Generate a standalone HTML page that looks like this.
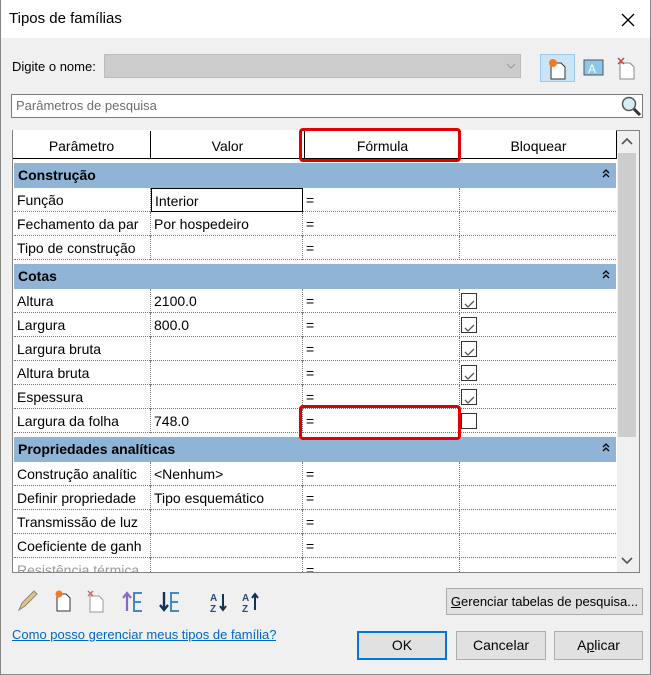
<!DOCTYPE html><html><head><meta charset="utf-8"><style>
*{box-sizing:border-box;margin:0;padding:0}
body{width:651px;height:675px;background:#f0f0f0;font-family:"Liberation Sans",sans-serif;font-size:14px;color:#000;position:relative;overflow:hidden}
.a{position:absolute}
.t{white-space:nowrap;overflow:hidden}
.row{position:absolute;left:14px;width:602px;height:24px;background:#fff;border-bottom:1px dotted #777}
.row div{position:absolute;top:0;height:24px;line-height:24px;padding-left:3px;white-space:nowrap;overflow:hidden}
.c1{left:0;width:137px;border-right:1px dotted #777}
.c2{left:137px;width:152px;border-right:1px dotted #777}
.c3{left:289px;width:157px;border-right:1px dotted #777}
.grp{position:absolute;left:14px;width:602px;height:25px;background:#8fb4d6;font-weight:bold;line-height:25px;padding-left:4px}
.grp svg{position:absolute;right:6px;top:6px}
.cb{position:absolute;left:447px!important;top:4px!important;width:16px!important;height:16px!important;border:1px solid #333;background:#fff;padding:0!important}
.btn{position:absolute;background:#e1e1e1;border:1px solid #adadad;text-align:center;font-size:14px;white-space:nowrap}
</style></head><body>
<div class="a" style="left:0;top:0;width:651px;height:38px;background:#fff"></div>
<div class="a" style="left:0;top:0;width:1px;height:675px;background:#888"></div>
<div class="a" style="right:0;top:0;width:1px;height:675px;background:#888"></div>
<div class="a" style="left:0;bottom:0;width:651px;height:1px;background:#888"></div>
<div class="a t" style="left:9px;top:10px;font-size:15px">Tipos de famílias</div>
<svg class="a" style="left:620px;top:12px" width="16" height="16"><path d="M2 2L14 14M14 2L2 14" stroke="#000" stroke-width="1.3"/></svg>

<div class="a t" style="left:12px;top:59px;font-size:13px">Digite o nome:</div>
<div class="a" style="left:104px;top:54px;width:417px;height:24px;background:#cccccc;border:1px solid #bbb"></div>
<svg class="a" style="left:506px;top:62px" width="10" height="8"><path d="M1 2L5 6L9 2" stroke="#999" fill="none"/></svg>
<div class="a" style="left:540px;top:54px;width:35px;height:28px;background:#cce4f7;border:1px solid #99c9ef"></div>
<svg class="a" style="left:546px;top:57px" width="24" height="24"><path d="M5 6h10l4 4v12H5z" fill="#fff" stroke="#333"/><circle cx="7" cy="6" r="4" fill="#f57a1f"/></svg>
<svg class="a" style="left:583px;top:58px" width="22" height="20"><rect x="1" y="2" width="19" height="15" fill="#8cc6ea" stroke="#555"/><text x="5" y="15" font-size="12" fill="#fff" font-family="Liberation Sans">A</text></svg>
<svg class="a" style="left:615px;top:55px" width="24" height="26"><path d="M5 8h10l4 4v12H5z" fill="#fff" stroke="#888"/><path d="M3 3l6 6M9 3l-6 6" stroke="#c44" stroke-width="1.5"/></svg>

<div class="a" style="left:11px;top:94px;width:632px;height:24px;background:#fff;border:1px solid #7a7a7a"></div>
<div class="a t" style="left:16px;top:98px;font-size:13px;color:#6d6d6d">Parâmetros de pesquisa</div>
<svg class="a" style="left:620px;top:95px" width="22" height="22"><circle cx="9" cy="9" r="6.5" fill="#d8eef7" stroke="#555" stroke-width="1.5"/><path d="M14 14l6 6" stroke="#333" stroke-width="3"/></svg>

<div class="a" style="left:12px;top:130px;width:628px;height:443px;background:#fff;border:1px solid #828282"></div>
<div class="a" style="left:13px;top:130px;width:603px;height:29px;background:#fff;border-bottom:1px solid #000"></div>
<div class="a" style="left:150px;top:131px;width:1px;height:28px;background:#000"></div>
<div class="a" style="left:304px;top:131px;width:1px;height:28px;background:#000"></div>
<div class="a" style="left:460px;top:131px;width:1px;height:28px;background:#000"></div>
<div class="a" style="left:616px;top:131px;width:1px;height:28px;background:#000"></div>
<div class="a t" style="left:13px;top:138px;width:137px;text-align:center">Parâmetro</div>
<div class="a t" style="left:151px;top:138px;width:153px;text-align:center">Valor</div>
<div class="a t" style="left:305px;top:138px;width:155px;text-align:center">Fórmula</div>
<div class="a t" style="left:461px;top:138px;width:155px;text-align:center">Bloquear</div>
<div class="a" style="left:617px;top:131px;width:22px;height:441px;background:#f0f0f0"></div>
<div class="a" style="left:618px;top:153px;width:18px;height:284px;background:#cdcdcd"></div>
<svg class="a" style="left:621px;top:138px" width="12" height="8"><path d="M1 6L6 1L11 6" stroke="#555" stroke-width="1.6" fill="none"/></svg>
<svg class="a" style="left:621px;top:557px" width="12" height="8"><path d="M1 1L6 6L11 1" stroke="#555" stroke-width="1.6" fill="none"/></svg>

<div class="grp" style="top:163px">Construção<svg width="8" height="10"><path d="M1 4L4 1L7 4M1 8L4 5L7 8" stroke="#000" stroke-width="1.3" fill="none"/></svg></div>
<div class="row" style="top:188px"><div class="c1">Função</div><div class="c2" style="border:1px solid #000;height:24px">Interior</div><div class="c3">=</div></div>
<div class="row" style="top:212px"><div class="c1">Fechamento da par</div><div class="c2">Por hospedeiro</div><div class="c3">=</div></div>
<div class="row" style="top:236px"><div class="c1">Tipo de construção</div><div class="c2"></div><div class="c3">=</div></div>
<div class="grp" style="top:264px">Cotas<svg width="8" height="10"><path d="M1 4L4 1L7 4M1 8L4 5L7 8" stroke="#000" stroke-width="1.3" fill="none"/></svg></div>
<div class="row" style="top:289px"><div class="c1">Altura</div><div class="c2">2100.0</div><div class="c3">=</div><div class="cb"><svg width="14" height="14"><path d="M3 7l3 3 6-6" stroke="#555" fill="none" stroke-width="1.3"/></svg></div></div>
<div class="row" style="top:313px"><div class="c1">Largura</div><div class="c2">800.0</div><div class="c3">=</div><div class="cb"><svg width="14" height="14"><path d="M3 7l3 3 6-6" stroke="#555" fill="none" stroke-width="1.3"/></svg></div></div>
<div class="row" style="top:337px"><div class="c1">Largura bruta</div><div class="c2"></div><div class="c3">=</div><div class="cb"><svg width="14" height="14"><path d="M3 7l3 3 6-6" stroke="#555" fill="none" stroke-width="1.3"/></svg></div></div>
<div class="row" style="top:361px"><div class="c1">Altura bruta</div><div class="c2"></div><div class="c3">=</div><div class="cb"><svg width="14" height="14"><path d="M3 7l3 3 6-6" stroke="#555" fill="none" stroke-width="1.3"/></svg></div></div>
<div class="row" style="top:385px"><div class="c1">Espessura</div><div class="c2"></div><div class="c3">=</div><div class="cb"><svg width="14" height="14"><path d="M3 7l3 3 6-6" stroke="#555" fill="none" stroke-width="1.3"/></svg></div></div>
<div class="row" style="top:409px"><div class="c1">Largura da folha</div><div class="c2">748.0</div><div class="c3">=</div><div class="cb"></div></div>
<div class="grp" style="top:437px">Propriedades analíticas<svg width="8" height="10"><path d="M1 4L4 1L7 4M1 8L4 5L7 8" stroke="#000" stroke-width="1.3" fill="none"/></svg></div>
<div class="row" style="top:462px"><div class="c1">Construção analític</div><div class="c2">&lt;Nenhum&gt;</div><div class="c3">=</div></div>
<div class="row" style="top:486px"><div class="c1">Definir propriedade</div><div class="c2">Tipo esquemático</div><div class="c3">=</div></div>
<div class="row" style="top:510px"><div class="c1">Transmissão de luz</div><div class="c2"></div><div class="c3">=</div></div>
<div class="row" style="top:534px"><div class="c1">Coeficiente de ganh</div><div class="c2"></div><div class="c3">=</div></div>
<div class="row" style="top:558px;height:14px;overflow:hidden;border:none"><div class="c1" style="color:#999">Resistência térmica</div><div class="c2"></div><div class="c3">=</div></div>

<div class="a" style="left:299px;top:128px;width:162px;height:34px;border:3px solid #e00000;border-radius:4px"></div>
<div class="a" style="left:299px;top:405px;width:162px;height:35px;border:3px solid #e00000;border-radius:4px"></div>

<svg class="a" style="left:14px;top:588px" width="250" height="26">
<path d="M5 22l3-7 12-12 3 3-12 12z" fill="#e6c27a" stroke="#888"/>
<path d="M43 6h9l4 4v13H43z" fill="#fff" stroke="#333"/><circle cx="45" cy="6" r="3.5" fill="#f57a1f"/>
<path d="M76 8h9l4 4v12H76z" fill="#fff" stroke="#999"/><path d="M74 3l5 5M79 3l-5 5" stroke="#c66" stroke-width="1.4"/>
<path d="M113 23V6M109 10l4-5 4 5" stroke="#86c" stroke-width="2.2" fill="none"/><path d="M128 5h-8v18h8M120 14h7" stroke="#48c" stroke-width="2" fill="none"/>
<path d="M150 4v17M146 17l4 5 4-5" stroke="#135" stroke-width="2.4" fill="none"/><path d="M165 5h-8v18h8M157 14h7" stroke="#48c" stroke-width="2" fill="none"/>
<text x="196" y="13" font-size="10" font-weight="bold" fill="#2a4a7a" font-family="Liberation Sans">A</text><text x="196" y="24" font-size="10" font-weight="bold" fill="#2a4a7a" font-family="Liberation Sans">Z</text><path d="M209 6v16M206 18l3 4 3-4" stroke="#135" stroke-width="2" fill="none"/>
<text x="228" y="13" font-size="10" font-weight="bold" fill="#2a4a7a" font-family="Liberation Sans">A</text><text x="228" y="24" font-size="10" font-weight="bold" fill="#2a4a7a" font-family="Liberation Sans">Z</text><path d="M241 22V6M238 10l3-4 3 4" stroke="#135" stroke-width="2" fill="none"/>
</svg>
<div class="btn" style="left:446px;top:588px;width:197px;height:27px;line-height:25px;font-size:13px"><u>G</u>erenciar tabelas de pesquisa...</div>
<div class="a t" style="left:12px;top:627px;font-size:13px;color:#0066cc;text-decoration:underline">Como posso gerenciar meus tipos de família?</div>
<div class="btn" style="left:357px;top:631px;width:90px;height:29px;line-height:25px;border:2px solid #0078d7">OK</div>
<div class="btn" style="left:456px;top:631px;width:90px;height:29px;line-height:27px">Cancelar</div>
<div class="btn" style="left:554px;top:631px;width:89px;height:29px;line-height:27px">A<u>p</u>licar</div>
</body></html>
